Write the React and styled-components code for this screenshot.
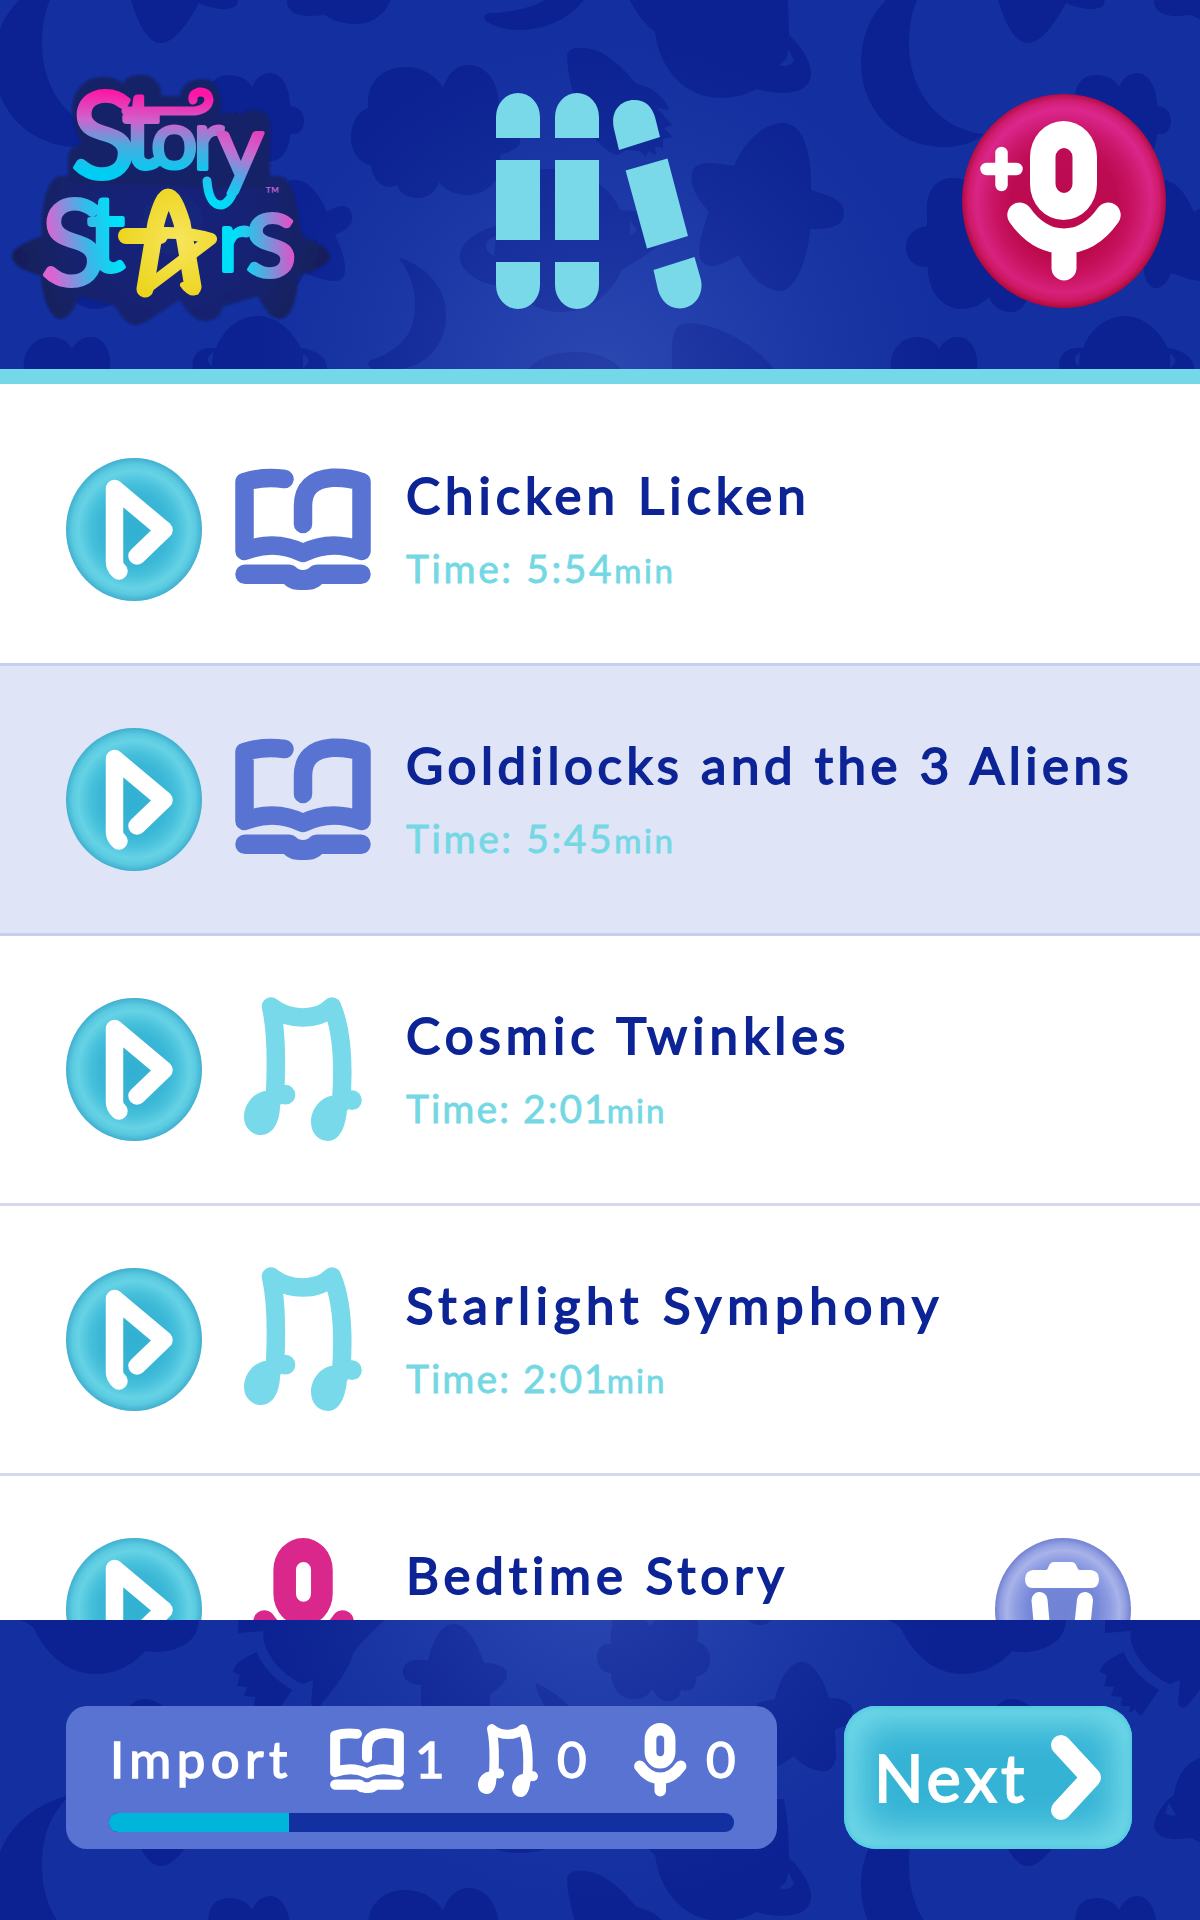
import React from "react";
import styled, { createGlobalStyle } from "styled-components";

const GlobalStyle = createGlobalStyle`
  * { box-sizing: border-box; }
  body { margin: 0; background: #1430a0; }
`;

const Screen = styled.main`
  width: 1200px;
  height: 1920px;
  display: flex;
  flex-direction: column;
  overflow: hidden;
  font-family: Lato, "Noto Sans", sans-serif;
  background: #fff;
`;

const NightBand = styled.div`
  position: relative;
  isolation: isolate;
  overflow: hidden;
  background: #1430a0;
`;

const Header = styled(NightBand)`
  flex: 0 0 384px;
  border-bottom: 15px solid #74d8e8;
  padding: 33px 34px 0 10px;
  display: grid;
  grid-template-columns: 485px 1fr auto;
  align-items: center;
`;

const Footer = styled(NightBand)`
  flex: 0 0 300px;
  padding: 86px 68px 0 66px;
  display: flex;
  justify-content: space-between;
  align-items: flex-start;
`;

const Backdrop = styled.svg`
  position: absolute;
  inset: 0;
  z-index: -1;
  width: 1200px;
`;

const List = styled.ul`
  flex: 1 1 0;
  min-height: 0;
  overflow: hidden;
  margin: 0;
  padding: 12px 0 0;
  list-style: none;
  background: #fff;
`;

const Row = styled.li`
  height: 270px;
  padding: 0 69px 0 66px;
  display: flex;
  align-items: center;
  border-bottom: 3px solid ${(p) => (p.$soft ? "#d5d8ee" : "#c6ceee")};
  background: ${(p) => (p.$selected ? "#dfe4f6" : "#fff")};
`;

const tones = {
  sky: "radial-gradient(closest-side, #31b0d1 0%, #3ab6d6 50%, #46c0db 64%, #66d2e5 82%, #5acae0 91%, #3fafd0 100%)",
  pink: "linear-gradient(to bottom, rgba(220,40,150,0.12), rgba(190,0,30,0.2)), radial-gradient(closest-side, #b80950 0%, #ba0a52 52%, #c81467 68%, #dc2890 86%, #cf1c70 94%, #ae0a3c 100%)",
  violet: "radial-gradient(closest-side, #6f82d5 0%, #7587d7 50%, #8f9de2 70%, #a8b3e9 83%, #929fe1 92%, #7382d2 100%)",
};

const RoundButton = styled.button`
  flex: none;
  width: ${(p) => (p.$large ? 204 : 136)}px;
  height: ${(p) => (p.$large ? 214 : 143)}px;
  border: 0;
  border-radius: 50%;
  padding: 0;
  background: ${(p) => tones[p.$tone]};
  svg { display: block; width: 100%; height: 100%; }
`;

const KindSlot = styled.div`
  width: 136px;
  margin: 0 35px 1px 33px;
  display: flex;
  justify-content: center;
`;

const Caption = styled.div`
  flex: 1;
  display: flex;
  flex-direction: column;
  gap: 19px;
  white-space: nowrap;
`;

const Title = styled.div`
  font-size: 51px;
  line-height: 60px;
  color: #0c2496;
  letter-spacing: ${(p) => p.$tracking}px;
  -webkit-text-stroke: 1.8px #0c2496;
`;

const Time = styled.div`
  font-size: 39px;
  line-height: 48px;
  color: #74d8e4;
  letter-spacing: ${(p) => p.$tracking}px;
  -webkit-text-stroke: 0.8px #74d8e4;
  small {
    font-size: 33px;
    margin-left: ${(p) => (p.$narrow ? -2 : 0)}px;
  }
`;

const ImportPanel = styled.section`
  width: 711px;
  height: 143px;
  padding: 15px 43px 0 43px;
  border-radius: 21px;
  background: #5873d2;
  color: #fff;
`;

const ImportLine = styled.div`
  height: 78px;
  display: grid;
  grid-template-columns: 221px 85px 63px 79px 77px 72px 1fr;
  align-items: center;
  svg { display: block; }
`;

const ImportText = styled.span`
  font-size: 51px;
  line-height: 60px;
  letter-spacing: ${(p) => p.$tracking || 0}px;
  padding: 0 0 2px ${(p) => p.$inset || 0}px;
  -webkit-text-stroke: 1.5px #fff;
`;

const Track = styled.div`
  margin-top: 14px;
  height: 19px;
  border-radius: 9px;
  overflow: hidden;
  background: #12309f;
`;

const Fill = styled.div`
  height: 100%;
  background: #00b5da;
`;

const NextButton = styled.button`
  width: 288px;
  height: 143px;
  border: 0;
  border-radius: 32px;
  padding: 0 30px;
  display: flex;
  align-items: center;
  justify-content: space-between;
  font: 400 65px/78px Lato, "Noto Sans", sans-serif;
  letter-spacing: 4px;
  color: #fff;
  -webkit-text-stroke: 1.8px #fff;
  background: #35b3d5;
  box-shadow: inset 0 0 5px 2px #4fc8df, inset 0 0 34px 18px #74dae9;
`;

const NextLabel = styled.span`
  padding-bottom: 2px;
`;

/* Night sky motif, repeated every 867px */
const SkyTile = () => (
  <g fillRule="evenodd">
    <path d="M70-28C20-15-6 20-6 63C-6 110 30 147 77 147C95 147 110 141 117 134C75 130 42 95 42 43C42 10 52-10 70-28Z" />
    <path d="M145-124C120-124 110-80 120-40C124-20 128-8 131 0C140 30 150 43 161 43C175 43 190 20 199 3C215 10 228 11 236 6C244-10 225-30 205-45C195-90 165-124 145-124Z" />
    <path d="M333-65C318-60 309-45 307-28C295-20 287-5 287 4C290 14 300 16 310 16L325 15C335 22 345 24 357 24C375 24 388 10 391-2V-65ZM302-20L309-8Q303-6 298-10Z" />
    <path d="M536-140C534-132 550-110 560-90C575-40 560-5 545 0C530 9 505 13 490 13C484 14 482 18 487 22C497 28 508 30 520 30C555 30 580 10 590-10C610-60 590-115 536-140Z" />
    <path d="M368 108C366 80 385 67 405 67C422 67 436 75 443 88C448 72 458 65 469 65C488 65 499 85 499 105C512 112 520 125 520 142C518 150 508 152 500 155C505 175 490 195 467 195C455 195 445 190 439 182C435 193 428 198 417 198C407 198 400 193 397 185C385 192 372 180 371 165C358 163 351 150 351 138C351 122 358 112 368 108Z" />
    <path d="M209 90C212 78 222 75 229 75C240 75 249 80 252 87C257 76 264 73 270 73C282 73 290 88 290 106C300 107 304 113 304 121C304 131 298 135 290 134C290 150 280 165 265 160H200Z" />
    <path d="M290 180C308 177 320 195 327 212C345 200 353 208 352 220C350 230 340 232 335 235C347 260 350 281 335 281C325 281 312 276 304 273C301 283 294 289 288 288C280 287 276 275 276 260V195Z" />
    <path d="M60 215C58 190 70 178 85 178C98 178 106 182 110 192H150L160 300C155 310 150 312 144 312C133 312 126 306 122 297C116 304 105 309 95 309C75 309 60 290 61 267C48 268 39 260 39 247C39 236 48 227 60 226Z" />
    <path d="M734 166C745 140 765 123 783 123C800 123 812 145 811 190C825 195 844 198 844 213C844 226 830 230 810 229C808 260 795 291 780 291C765 291 748 275 739 255C725 263 715 268 708 265C695 262 697 245 709 212C695 195 690 185 692 173C695 160 712 162 734 166Z" />
    <path d="M625-12C632 8 642 22 655 32C660 70 685 98 722 98C735 98 748 94 756 89C775 94 811 98 811 73C811 60 800 45 789 35C789 5 787-5 784-24L656-20ZM788 49L794 60C792 66 785 67 779 65C786 61 788 56 788 49Z" />
    <path d="M567 55C570 44 590 48 600 52C622 64 630 78 637 84C655 88 665 98 669 110L657 108L672 125L664 128L673 137L663 139V148L655 146L656 155L648 151L646 157L640 151L626 150L618 155C592 150 568 95 567 55Z" />
    <path d="M496 228C500 180 530 165 560 170C590 172 612 190 620 210L637 211C646 222 644 237 648 248L657 247C640 260 625 267 622 270C610 295 590 312 560 312C540 312 520 300 505 286C480 286 458 270 460 255C462 242 475 232 496 226ZM496 236C484 240 482 250 494 256ZM630 220V236L637 230Z" />
    <path d="M400 258C430 268 446 290 446 315C446 345 425 369 395 369H372C364 362 370 360 380 357C405 345 415 330 415 305C415 285 408 270 400 260Z" />
    <path d="M193 369C190 355 200 346 216 348C224 328 240 316 258 316C276 316 292 330 301 348C318 350 328 360 327 369ZM213 352Q203 360 212 366ZM303 354V368Q314 360 303 354Z" />
    <path d="M24 369C22 350 35 337 50 337C60 337 68 341 72 349C77 340 84 337 91 337C103 337 112 350 110 369Z" />
    <path d="M528 369C540 356 558 352 575 352C595 352 612 358 621 369Z" />
    <path d="M672 369C672 340 670 323 690 323C720 325 755 345 774 369Z" />
    <path d="M17-204C30-200 35-195 36-190C50-165 70-149 95-149C118-149 135-160 145-172C165-168 199-175 199-204Z" />
    <path d="M238-204V-190L264-192C260-180 275-150 303-139L313-143L311-119Q314-113 320-117C335-135 350-155 353-170C365-185 380-198 385-204Z" />
    <path d="M257-171C262-155 280-140 292-133L275-108Q270-108 269-114L262-110L263-117L254-117L255-126L244-127L247-136L237-137L240-148L233-151C235-162 247-166 257-171Z" />
    <path d="M454-199C467-199 478-178 484-160C500-160 508-155 507-147C505-138 495-133 490-128V-95H421V-138C405-139 402-148 403-154C407-165 420-164 428-162C432-180 440-199 454-199Z" />
    <path d="M613-204Q610-190 611-179C600-180 597-172 597-165C598-156 603-150 611-150C612-132 622-124 633-124C643-124 650-128 652-134C658-124 663-122 668-122C676-122 680-126 681-134C690-128 698-138 696-146C706-148 710-155 710-164C710-174 704-180 697-181Q700-195 697-204H656L650-197L645-204Z" />
    <path d="M748-204Q752-198 760-198Q768-198 771-204Z" />
    <path d="M757-120L775-124C780-145 790-161 802-161C814-161 825-140 829-125C845-125 853-119 853-110C853-100 845-96 835-94L836-65C833-53 827-51 821-52C810-53 800-60 794-67L779-57L770-60Z" />
  </g>
);

const Sky = ({ height, offset, glowY }) => {
  const id = "glow" + height;
  return (
    <Backdrop viewBox={`0 0 1200 ${height}`} height={height} aria-hidden="true">
      <defs>
        <radialGradient id={id} gradientUnits="userSpaceOnUse" cx="600" cy={glowY} r="350">
          <stop offset="0" stopColor="#6280d8" stopOpacity="0.32" />
          <stop offset="0.45" stopColor="#4c6bcd" stopOpacity="0.2" />
          <stop offset="1" stopColor="#3050b8" stopOpacity="0" />
        </radialGradient>
      </defs>
      <g transform={`translate(0 ${offset})`} fill="#0c2292">
        <SkyTile />
        <g transform="translate(867 0)"><SkyTile /></g>
      </g>
      <rect width="1200" height={height} fill={`url(#${id})`} />
    </Backdrop>
  );
};

const Logo = () => (
  <svg width="324" height="270" viewBox="10 67 324 270" aria-label="Story Stars">
    <defs>
      <linearGradient id="story" gradientUnits="userSpaceOnUse" x1="150" y1="88" x2="145" y2="190">
        <stop offset="0.05" stopColor="#ff14a4" />
        <stop offset="0.34" stopColor="#cf62cd" />
        <stop offset="0.6" stopColor="#45aee0" />
        <stop offset="0.85" stopColor="#00cdf3" />
      </linearGradient>
      <linearGradient id="tail" gradientUnits="userSpaceOnUse" x1="256" y1="120" x2="225" y2="205">
        <stop offset="0" stopColor="#f22bb2" />
        <stop offset="0.4" stopColor="#c86bd0" />
        <stop offset="0.75" stopColor="#2fb9ea" />
        <stop offset="1" stopColor="#00dcf8" />
      </linearGradient>
      <linearGradient id="stars" gradientUnits="userSpaceOnUse" x1="44" y1="270" x2="292" y2="240">
        <stop offset="0.03" stopColor="#dc64d2" />
        <stop offset="0.19" stopColor="#38b8e8" />
        <stop offset="0.3" stopColor="#00e0f8" />
        <stop offset="0.78" stopColor="#00dff8" />
        <stop offset="0.87" stopColor="#52abe0" />
        <stop offset="1" stopColor="#e052c8" />
      </linearGradient>
      <radialGradient id="plate" gradientUnits="userSpaceOnUse" cx="172" cy="225" r="165">
        <stop offset="0" stopColor="#14267e" />
        <stop offset="0.6" stopColor="#122270" />
        <stop offset="1" stopColor="#131f57" />
      </radialGradient>
      <radialGradient id="gold" gradientUnits="userSpaceOnUse" cx="178" cy="242" r="60">
        <stop offset="0" stopColor="#f8e55c" />
        <stop offset="1" stopColor="#ecd51e" />
      </radialGradient>
      <filter id="soft" x="-10%" y="-10%" width="120%" height="120%"><feGaussianBlur stdDeviation="1" /></filter>
    </defs>
    <g filter="url(#soft)" fill="url(#plate)">
      <path d="M12 257C12 247 35 240 42 237C40 215 45 180 60 177H280C295 180 298 215 302 237C315 242 330 250 330 258C328 266 308 275 298 277C298 300 290 320 280 320C270 320 262 305 258 297L222 308C222 318 212 322 205 322C195 322 187 312 179 301L150 320C140 328 130 328 122 318L115 307L79 297C76 308 68 320 60 320C50 318 42 300 41 277C30 273 12 268 12 257Z" />
      <path fill="#132167" d="M68 184V163C67 152 73 145 83 146C73 130 71 112 73 103C76 87 88 78 103 78C112 78 118 80 123 85C126 74 160 68 162 97H180C182 85 190 80 203 80C218 80 224 97 220 116C228 113 236 113 243 116C247 108 270 108 270 124V190Z" />
    </g>
    <g fontFamily="Lato, sans-serif" strokeLinejoin="round" strokeLinecap="round">
      <g fill="url(#story)" stroke="url(#story)" strokeWidth="4">
        <text>
          <tspan x="71" y="179" fontSize="120">S</tspan>
          <tspan x="122" y="169" fontSize="106">t</tspan>
          <tspan x="151" y="169" fontSize="82">o</tspan>
          <tspan x="193" y="170" fontSize="84">r</tspan>
        </text>
        <text x="217" y="179" fontSize="90" fill="url(#tail)" stroke="url(#tail)">y</text>
        <path fill="none" strokeWidth="9" d="M126 112H195Q208 110 209 101Q208 92 199 93Q192 95 193 101" />
        <path fill="none" stroke="url(#tail)" strokeWidth="9" d="M207 182Q209 206 221 206Q229 205 234 191" />
      </g>
      <g fill="url(#stars)" stroke="url(#stars)" strokeWidth="4">
        <text>
          <tspan x="41" y="286" fontSize="118">S</tspan>
          <tspan x="87" y="272" fontSize="106">t</tspan>
        </text>
        <text>
          <tspan x="218" y="272" fontSize="86">r</tspan>
          <tspan x="245" y="277" fontSize="120">s</tspan>
        </text>
      </g>
      <text x="265" y="202" fontSize="20" fill="#b260c8">™</text>
    </g>
    <g fill="none" stroke="url(#gold)" strokeLinecap="round" strokeLinejoin="round">
      <path strokeWidth="17" d="M145 290L156 224Q163 198 168 198Q174 198 182 224L193 288" />
      <path strokeWidth="16" d="M126 237H160" />
      <path strokeWidth="12" d="M160 234Q190 233 211 240L145 290" />
      <path strokeWidth="6" d="M183 286Q188 294 196 293" />
    </g>
  </svg>
);

const Books = () => (
  <svg width="208" height="218" viewBox="495 93 208 218" fill="#79d9e9" aria-label="Library">
    <path d="M496 139V118A22 24 0 0 1 540 118V139ZM496 161H540V241H496ZM496 263H540V286A22 24 0 0 1 496 286Z" />
    <path d="M555 139V118A22 24 0 0 1 599 118V139ZM555 161H599V241H555ZM555 263H599V286A22 24 0 0 1 555 286Z" />
    <path d="M619 151L614 130C610 113 620 101 634 101C646 101 652 108 655 118L660 138ZM625.6 171.5L667.5 159.5L688 237L647 249.5ZM653.5 271L694.5 258L701 281C704 296 694 309.5 680 309.5C668 309.5 661 301 658 291Z" />
  </svg>
);

const MicShapes = () => (
  <>
    <path stroke="none" fillRule="evenodd" d="M23 36A33.500 36 0 0 1 90 36V63A33.500 36 0 0 1 23 63ZM48.5 36V63A8.5 9 0 0 0 65.5 63V36A8.5 9 0 0 0 48.5 36Z" />
    <path fill="none" strokeWidth="25" strokeLinecap="round" d="M12.8 94Q31 120 57 120Q83 120 101.200 94M57 122V147" />
  </>
);

const Mic = ({ width, color }) => (
  <svg width={width} height={width * 1.404} viewBox="0 0 114 160" fill={color} stroke={color} preserveAspectRatio="none">
    <MicShapes />
  </svg>
);

const Book = ({ width, height, color }) => (
  <svg width={width} height={height} viewBox="0 0 136 122" preserveAspectRatio="none">
    <path fill="none" stroke={color} strokeWidth="18.500" strokeLinecap="round" strokeLinejoin="round" d="M49.500 11Q28 8 9.500 14V83Q40 71 68 85Q96 71 126.500 83V14Q113 9 97 9.800Q68 12 68 38V56" />
    <path fill={color} d="M10 96.500H54C62 97 61 102 68 102C75 102 74 97 82 96.500H126A9.700 9.700 0 0 1 126 116H87C82 121 77 122 68 122C59 122 54 121 49 116H10A9.700 9.700 0 0 1 10 96.500Z" />
  </svg>
);

const Music = ({ width, height, color }) => (
  <svg width={width} height={height} viewBox="0 0 118 143" fill={color} preserveAspectRatio="none">
    <path fill="none" stroke={color} strokeWidth="18.500" strokeLinecap="round" strokeLinejoin="round" d="M31 98Q34 40 27 9.500C45 24 74 24 88 9.500Q102 42 97 106" />
    <path d="M22 93C8 95 0 108 0 119C0 130 8 137 17 137C30 137 36 122 36 108L40 100V88ZM88 98C75 100 67 113 67 124C67 135 74 143 84 143C97 143 102 126 103 112L106 104V93Z" />
    <circle cx="41.500" cy="97" r="9.800" />
    <circle cx="108" cy="102.500" r="9.800" />
  </svg>
);

const PlayButton = () => (
  <RoundButton $tone="sky" aria-label="Play">
    <svg viewBox="0 0 136 143" fill="none" stroke="#fff" strokeWidth="17.500" strokeLinecap="round" strokeLinejoin="round">
      <path d="M71 98L98 72L48.500 30.500V104Q48.500 109 53 113" />
    </svg>
  </RoundButton>
);

const TrashButton = () => (
  <RoundButton $tone="violet" aria-label="Delete">
    <svg viewBox="0 0 136 143" fill="none" stroke="#fff" strokeLinecap="round" strokeLinejoin="round">
      <path fill="#fff" stroke="none" d="M38 32H51C54 32 53 24 59 24H76C83 24 81 32 85 32H96Q104 33 104 41Q104 50 96 50H38Q30 50 30 41Q30 33 38 32Z" />
      <path strokeWidth="16" d="M44.500 62L49 110H85L90 62" />
    </svg>
  </RoundButton>
);

const kinds = {
  story: <Book width={136} height={122} color="#5873d2" />,
  music: <Music width={118} height={144} color="#77d9e9" />,
  recording: <Mic width={101} color="#da278b" />,
};

const tracks = [
  { title: "Chicken Licken", time: "5:54", kind: "story", tracking: 5 },
  { title: "Goldilocks and the 3 Aliens", time: "5:45", kind: "story", tracking: 4.55, selected: true },
  { title: "Cosmic Twinkles", time: "2:01", kind: "music", tracking: 5.1, timeTracking: 2.05, soft: true },
  { title: "Starlight Symphony", time: "2:01", kind: "music", tracking: 5.8, timeTracking: 2.05, soft: true },
  { title: "Bedtime Story", time: "1:30", kind: "recording", tracking: 4.9, removable: true },
];

export default function App() {
  return (
    <Screen>
      <GlobalStyle />
      <Header as="header">
        <Sky height={369} offset={0} glowY={385} />
        <Logo />
        <Books />
        <RoundButton $large $tone="pink" aria-label="Add recording">
          <svg viewBox="0 0 204 214">
            <g transform="translate(45 27)" fill="#fff" stroke="#fff"><MicShapes /></g>
            <path stroke="#fff" strokeWidth="12.500" strokeLinecap="round" d="M24.500 75H54.500M39.500 59V91" />
          </svg>
        </RoundButton>
      </Header>
      <List>
        {tracks.map((t) => (
          <Row key={t.title} $selected={t.selected} $soft={t.soft}>
            <PlayButton />
            <KindSlot>{kinds[t.kind]}</KindSlot>
            <Caption>
              <Title $tracking={t.tracking}>{t.title}</Title>
              <Time $tracking={t.timeTracking ?? 2.6} $narrow={t.time.endsWith("1")}>
                Time: {t.time}<small>min</small>
              </Time>
            </Caption>
            {t.removable && <TrashButton />}
          </Row>
        ))}
      </List>
      <Footer as="footer">
        <Sky height={300} offset={203} glowY={-60} />
        <ImportPanel>
          <ImportLine>
            <ImportText $tracking={5.4} $inset={1}>Import</ImportText>
            <Book width={74} height={65} color="#fff" />
            <ImportText>1</ImportText>
            <Music width={60} height={73} color="#fff" />
            <ImportText>0</ImportText>
            <Mic width={52.5} color="#fff" />
            <ImportText>0</ImportText>
          </ImportLine>
          <Track><Fill style={{ width: `${(180 / 626) * 100}%` }} /></Track>
        </ImportPanel>
        <NextButton>
          <NextLabel>Next</NextLabel>
          <svg width="52" height="87" viewBox="0 0 52 87" fill="none" stroke="#fff" strokeWidth="20" strokeLinecap="round" strokeLinejoin="round">
            <path d="M11 11L41 43.500L11 76" />
          </svg>
        </NextButton>
      </Footer>
    </Screen>
  );
}
